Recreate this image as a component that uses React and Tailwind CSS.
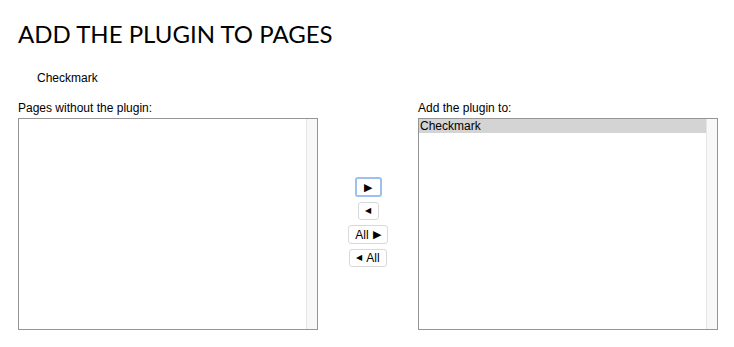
const Scrollbar = () => (
  <div className="absolute right-0 top-0 bottom-0 w-[11px] bg-[#f8f8f8] border-l border-[#e6e6e6]" />
);

const ListBox = ({ items = [] }) => (
  <div className="relative w-[300px] h-[212px] border border-[#959595] bg-white">
    <div className="pr-[11px]">
      {items.map((item) => (
        <div key={item} className="bg-[#d4d4d4] h-[14px] leading-[14px] pl-[1px] text-[12px] text-black">
          {item}
        </div>
      ))}
    </div>
    <Scrollbar />
  </div>
);

const MoveButton = ({ children, focused, className = "" }) => (
  <button
    className={
      "shrink-0 bg-white rounded-[3px] text-[12px] leading-none text-black flex items-center justify-center gap-[4px] " +
      (focused
        ? "border-2 border-[#9cc1ee] w-[27px] h-[20px]"
        : "border border-[#d9d9d9] ") +
      className
    }
  >
    {children}
  </button>
);

export default function App() {
  return (
    <div className="bg-white w-[734px] h-[347px] pl-[18px] pt-[20px] font-['Liberation_Sans',Arial,sans-serif] text-black">
      <h1 className="font-['Lato',sans-serif] text-[24px] leading-[28px]">ADD THE PLUGIN TO PAGES</h1>

      <div className="pl-[19px] pt-[23px] text-[12px] leading-[14px]">Checkmark</div>

      <div className="flex mt-[16px]">
        {/* Source list */}
        <div>
          <div className="text-[12px] leading-[14px] mb-[3px]">Pages without the plugin:</div>
          <ListBox />
        </div>

        {/* Move buttons */}
        <div className="w-[100px] pt-[13px] flex flex-col items-center justify-center gap-[5px]">
          <MoveButton focused>
            <span className="text-[11px]">▶</span>
          </MoveButton>
          <MoveButton className="w-[21px] h-[18px]">
            <span className="text-[8px]">◀</span>
          </MoveButton>
          <MoveButton className="w-[40px] h-[19px]">
            <span>All</span>
            <span className="text-[11px]">▶</span>
          </MoveButton>
          <MoveButton className="w-[38px] h-[18px]">
            <span className="text-[8px]">◀</span>
            <span>All</span>
          </MoveButton>
        </div>

        {/* Target list */}
        <div>
          <div className="text-[12px] leading-[14px] mb-[3px]">Add the plugin to:</div>
          <ListBox items={["Checkmark"]} />
        </div>
      </div>
    </div>
  );
}
